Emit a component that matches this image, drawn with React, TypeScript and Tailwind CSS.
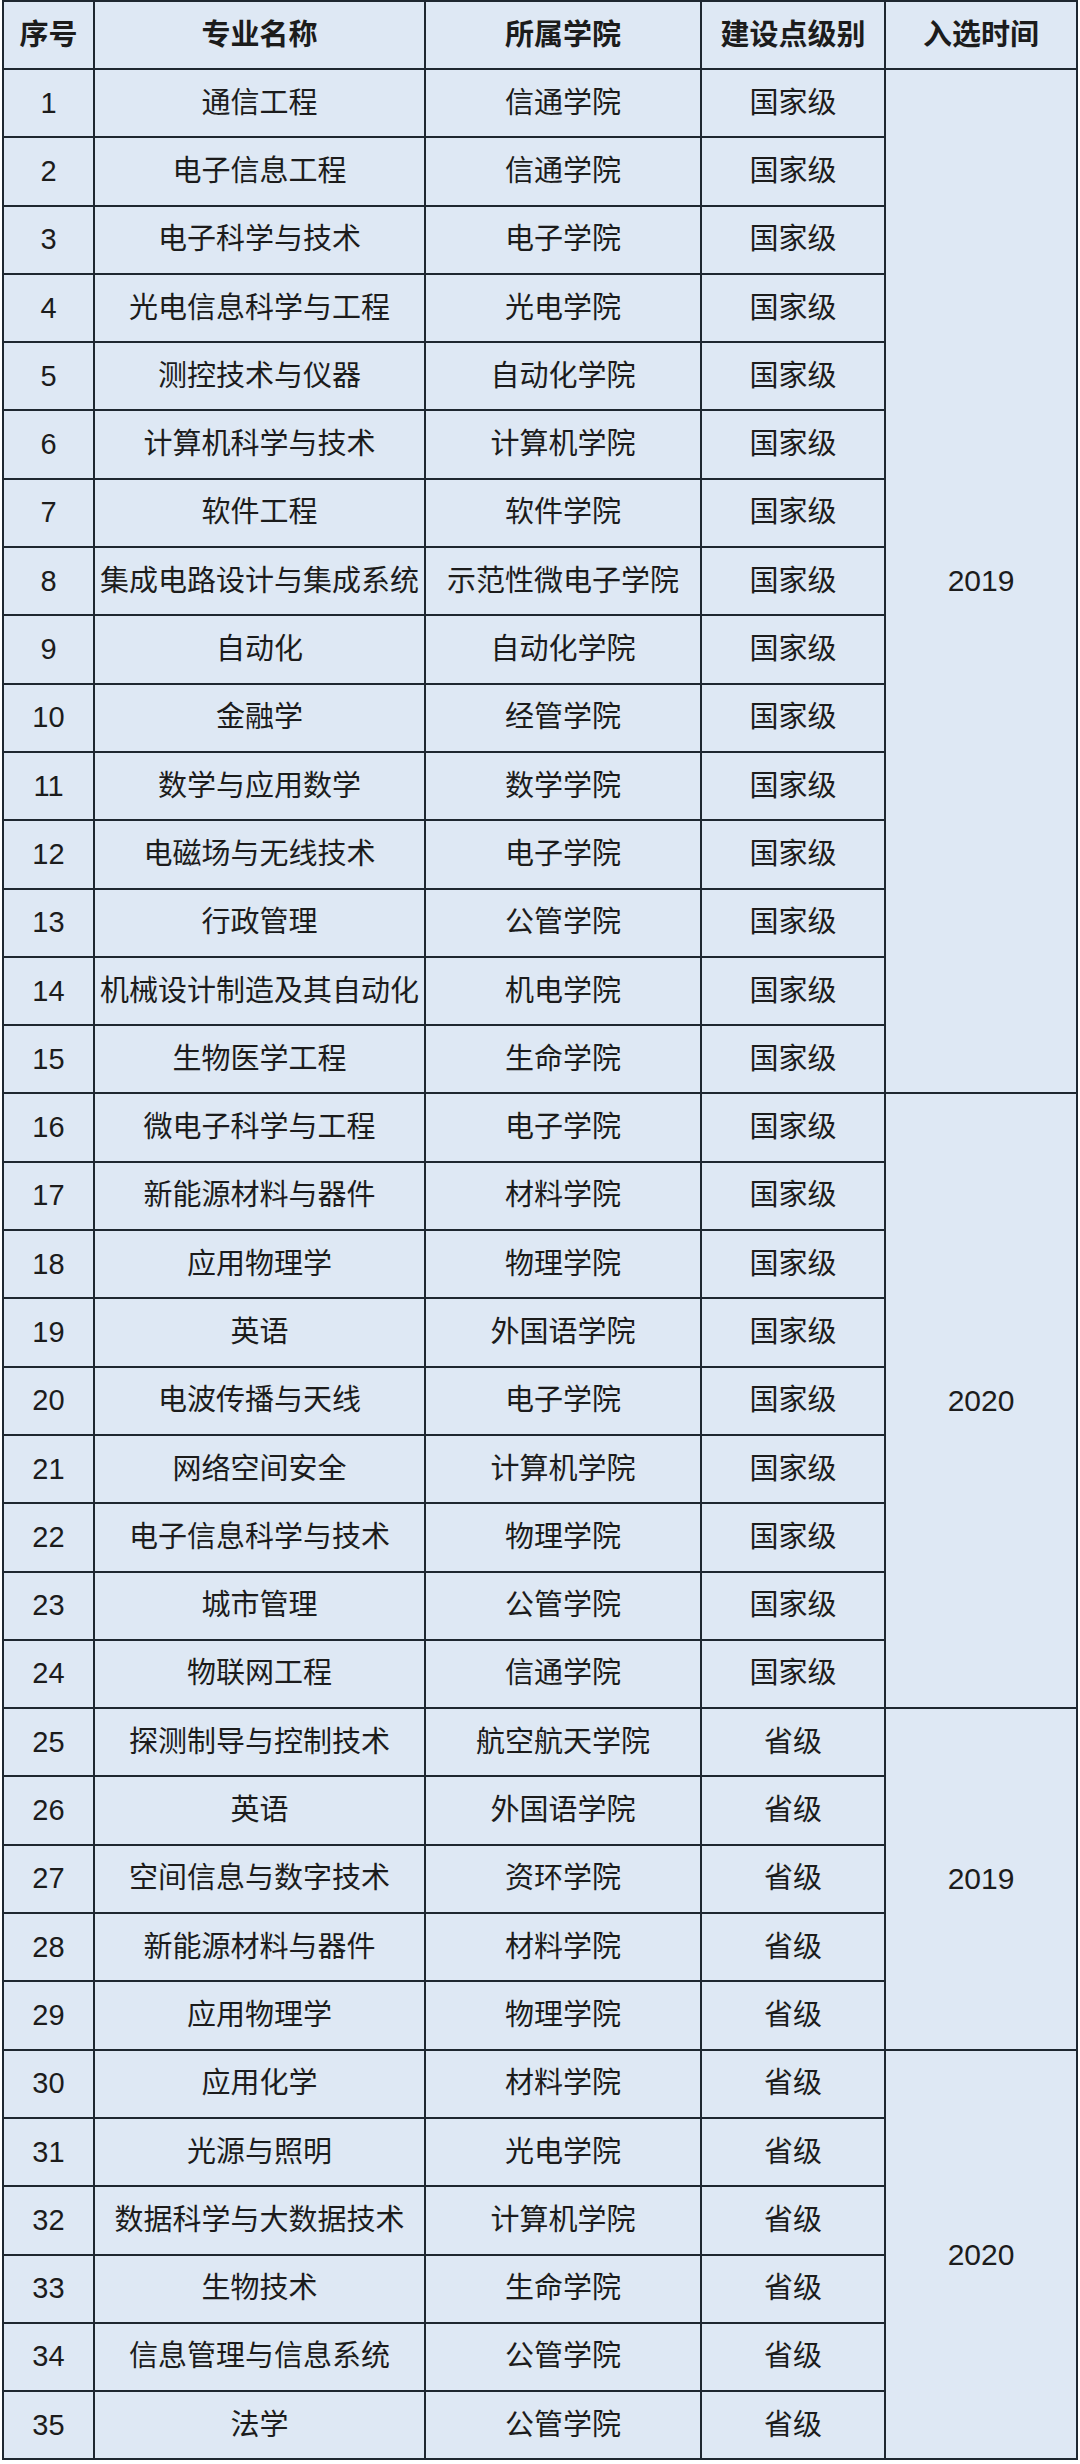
const rows: [string, string, string][] = [
  ["通信工程", "信通学院", "国家级"],
  ["电子信息工程", "信通学院", "国家级"],
  ["电子科学与技术", "电子学院", "国家级"],
  ["光电信息科学与工程", "光电学院", "国家级"],
  ["测控技术与仪器", "自动化学院", "国家级"],
  ["计算机科学与技术", "计算机学院", "国家级"],
  ["软件工程", "软件学院", "国家级"],
  ["集成电路设计与集成系统", "示范性微电子学院", "国家级"],
  ["自动化", "自动化学院", "国家级"],
  ["金融学", "经管学院", "国家级"],
  ["数学与应用数学", "数学学院", "国家级"],
  ["电磁场与无线技术", "电子学院", "国家级"],
  ["行政管理", "公管学院", "国家级"],
  ["机械设计制造及其自动化", "机电学院", "国家级"],
  ["生物医学工程", "生命学院", "国家级"],
  ["微电子科学与工程", "电子学院", "国家级"],
  ["新能源材料与器件", "材料学院", "国家级"],
  ["应用物理学", "物理学院", "国家级"],
  ["英语", "外国语学院", "国家级"],
  ["电波传播与天线", "电子学院", "国家级"],
  ["网络空间安全", "计算机学院", "国家级"],
  ["电子信息科学与技术", "物理学院", "国家级"],
  ["城市管理", "公管学院", "国家级"],
  ["物联网工程", "信通学院", "国家级"],
  ["探测制导与控制技术", "航空航天学院", "省级"],
  ["英语", "外国语学院", "省级"],
  ["空间信息与数字技术", "资环学院", "省级"],
  ["新能源材料与器件", "材料学院", "省级"],
  ["应用物理学", "物理学院", "省级"],
  ["应用化学", "材料学院", "省级"],
  ["光源与照明", "光电学院", "省级"],
  ["数据科学与大数据技术", "计算机学院", "省级"],
  ["生物技术", "生命学院", "省级"],
  ["信息管理与信息系统", "公管学院", "省级"],
  ["法学", "公管学院", "省级"],
];

// merged year cells, keyed by the row number where they start
const years: Record<number, { label: string; span: string }> = {
  1: { label: "2019", span: "row-span-15" },
  16: { label: "2020", span: "row-span-9" },
  25: { label: "2019", span: "row-span-5" },
  30: { label: "2020", span: "row-span-6" },
};

const headers = ["序号", "专业名称", "所属学院", "建设点级别", "入选时间"];

const cell = "bg-[#dee8f4] flex items-center justify-center whitespace-nowrap";

export default function App() {
  return (
    <div className="min-h-screen bg-white pl-[2px]">
      <div className="grid w-[1076px] grid-cols-[89px_329px_274px_182px_190px] grid-rows-[66px_repeat(35,66.3px)] gap-[2px] bg-[#1e2730] p-[2px] font-['Liberation_Sans','Noto_Sans_CJK_SC',sans-serif] text-[29px] leading-none text-[#1c1c1c]">
        {headers.map((h) => (
          <div key={h} className={`${cell} font-bold`}>
            {h}
          </div>
        ))}

        {rows.map(([name, school, level], i) => {
          const n = i + 1;
          const year = years[n];
          return [
            <div key={`n${n}`} className={cell}>
              {n}
            </div>,
            <div key={`a${n}`} className={cell}>
              {name}
            </div>,
            <div key={`b${n}`} className={cell}>
              {school}
            </div>,
            <div key={`c${n}`} className={cell}>
              {level}
            </div>,
            year ? (
              <div key={`y${n}`} className={`${cell} ${year.span} text-[30px]`}>
                {year.label}
              </div>
            ) : null,
          ];
        })}
      </div>
    </div>
  );
}
